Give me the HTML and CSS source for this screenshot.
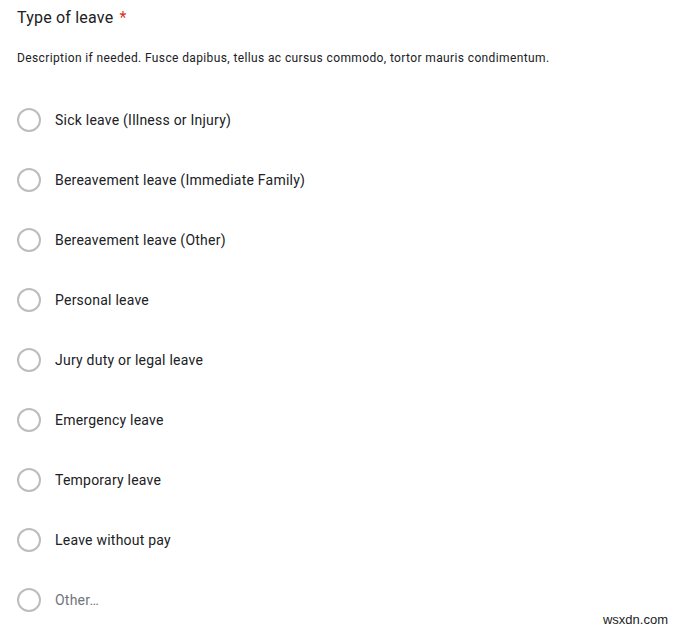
FILE: index.html
```html
<!DOCTYPE html>
<html>
<head>
<meta charset="utf-8">
<link rel="stylesheet" href="styles.css">
</head>
<body>
<div class="question">
  <div class="title">Type of leave <span class="req">*</span></div>
  <div class="desc">Description if needed. Fusce dapibus, tellus ac cursus commodo, tortor mauris condimentum.</div>
  <div class="options">
    <div class="opt"><span class="radio"></span><span class="label">Sick leave (Illness or Injury)</span></div>
    <div class="opt"><span class="radio"></span><span class="label">Bereavement leave (Immediate Family)</span></div>
    <div class="opt"><span class="radio"></span><span class="label">Bereavement leave (Other)</span></div>
    <div class="opt"><span class="radio"></span><span class="label">Personal leave</span></div>
    <div class="opt"><span class="radio"></span><span class="label">Jury duty or legal leave</span></div>
    <div class="opt"><span class="radio"></span><span class="label">Emergency leave</span></div>
    <div class="opt"><span class="radio"></span><span class="label">Temporary leave</span></div>
    <div class="opt"><span class="radio"></span><span class="label">Leave without pay</span></div>
    <div class="opt"><span class="radio"></span><span class="label other">Other…</span></div>
  </div>
</div>
<div class="watermark">wsxdn.com</div>
</body>
</html>
```
FILE: styles.css
```css
html, body {
  margin: 0;
  padding: 0;
  background: #fff;
}
body {
  width: 680px;
  height: 631px;
  overflow: hidden;
  position: relative;
  font-family: Roboto, "Noto Sans", sans-serif;
  color: #202124;
}
.question {
  padding: 7px 0 0 17px;
}
.title {
  font-size: 16px;
  line-height: 22px;
  height: 22px;
  letter-spacing: 0.2px;
}
.req {
  color: #d93025;
  margin-left: 2px;
}
.desc {
  margin-top: 20px;
  font-size: 12px;
  line-height: 18px;
  letter-spacing: 0.38px;
}
.options {
  margin-top: 41px;
  display: flex;
  flex-direction: column;
  gap: 36px;
}
.opt {
  display: flex;
  align-items: center;
  height: 24px;
}
.radio {
  width: 20px;
  height: 20px;
  border: 2px solid #bdbdbd;
  border-radius: 50%;
  flex: none;
}
.label {
  margin-left: 14px;
  font-size: 14px;
  letter-spacing: 0.23px;
}
.label.other {
  color: #70757a;
}
.watermark {
  position: absolute;
  right: 12px;
  bottom: 4px;
  font-family: "Liberation Sans", Arial, sans-serif;
  font-size: 13px;
  color: #222;
}
```
